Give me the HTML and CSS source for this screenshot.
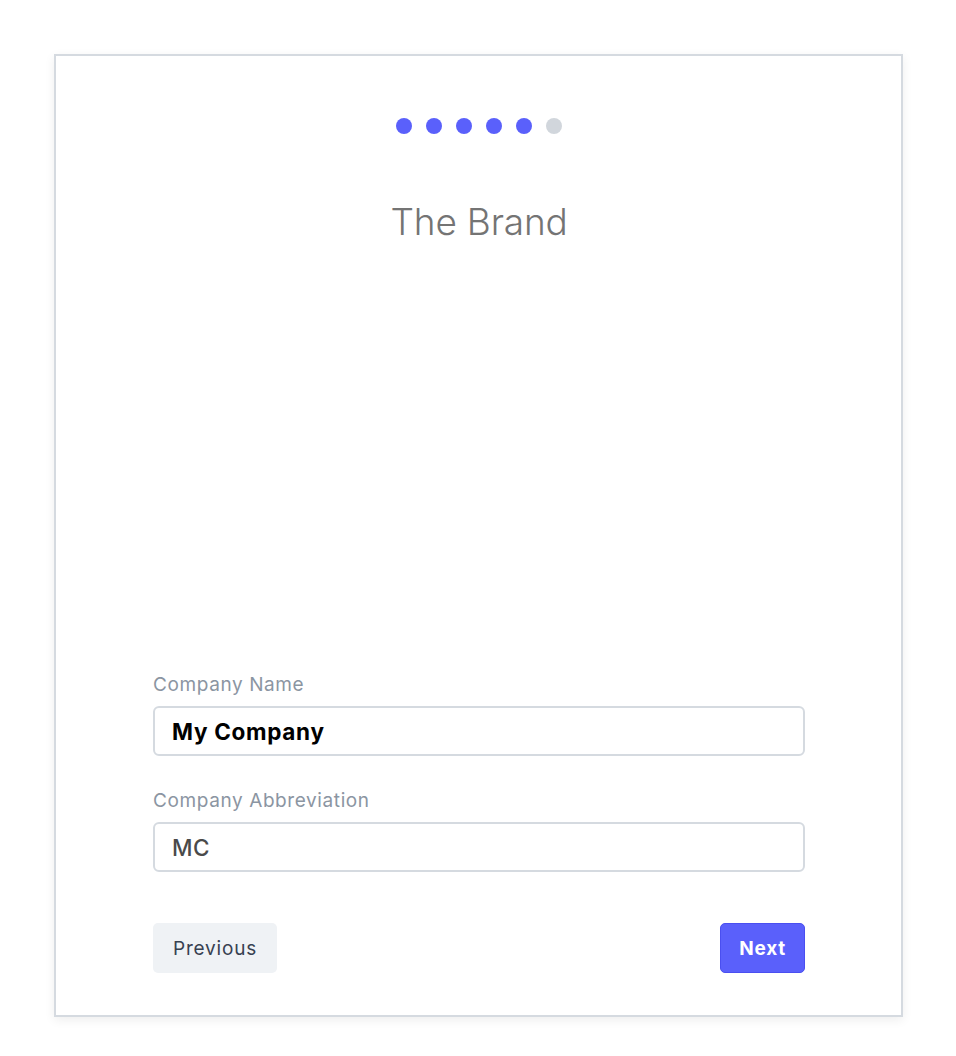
FILE: index.html
```html
<!DOCTYPE html>
<html lang="en">
<head>
<meta charset="utf-8">
<title>The Brand</title>
<link rel="stylesheet" href="styles.css">
</head>
<body>
<div class="card">
  <div class="steps">
    <span class="dot active"></span>
    <span class="dot active"></span>
    <span class="dot active"></span>
    <span class="dot active"></span>
    <span class="dot active"></span>
    <span class="dot"></span>
  </div>
  <h1 class="title">The Brand</h1>
  <div class="spacer"></div>
  <form class="form">
    <label class="label" for="name">Company Name</label>
    <input class="input input-bold" id="name" type="text" value="My Company">
    <label class="label label-2" for="abbr">Company Abbreviation</label>
    <input class="input" id="abbr" type="text" value="MC">
    <div class="actions">
      <button type="button" class="btn btn-secondary">Previous</button>
      <button type="button" class="btn btn-primary">Next</button>
    </div>
  </form>
</div>
</body>
</html>
```
FILE: styles.css
```css
* { box-sizing: border-box; }
html, body { margin: 0; background: #ffffff; }
body {
  padding: 54px;
  font-family: Inter, "Noto Sans", "Liberation Sans", sans-serif;
}
.card {
  width: 849px;
  height: 963px;
  border: 2px solid #d5dae0;
  box-shadow: 0 3px 10px rgba(0, 0, 0, 0.07);
  background: #fff;
  display: flex;
  flex-direction: column;
  padding: 62px 96px 42px 97px;
}
.steps {
  display: flex;
  justify-content: center;
  gap: 14px;
  height: 16px;
}
.dot {
  width: 16px;
  height: 16px;
  border-radius: 50%;
  background: #d1d6dc;
}
.dot.active { background: #5a60fb; }
.title {
  margin: 66px 0 0;
  text-align: center;
  font-size: 37px;
  line-height: 44px;
  font-weight: 300;
  color: #747474;
  letter-spacing: -0.2px;
}
.spacer { flex: 1; }
.form { display: flex; flex-direction: column; }
.label {
  font-size: 19px;
  line-height: 24px;
  color: #8b95a2;
  letter-spacing: 0.6px;
  margin-bottom: 9px;
}
.label-2 { margin-top: 33px; }
.input {
  width: 100%;
  height: 50px;
  border: 2px solid #d5dae0;
  border-radius: 6px;
  padding: 0 17px;
  font-family: inherit;
  font-size: 22.5px;
  font-weight: 500;
  color: #4a4a4a;
  letter-spacing: 0.5px;
  background: #fff;
  outline: none;
}
.input-bold { font-weight: 700; color: #000; letter-spacing: 0.7px; }
.actions {
  display: flex;
  justify-content: space-between;
  margin-top: 51px;
}
.btn {
  height: 50px;
  border-radius: 5px;
  font-family: inherit;
  font-size: 19px;
  padding: 0 19px;
  cursor: pointer;
}
.btn-secondary {
  background: #eff2f5;
  border: none;
  color: #374151;
  font-weight: 400;
  letter-spacing: 0.8px;
  padding: 0 20px;
}
.btn-primary {
  background: #5a60fb;
  border: 1px solid #4a4ff0;
  color: #fff;
  font-weight: 700;
  letter-spacing: 0.8px;
  padding: 0 18px;
}
```
